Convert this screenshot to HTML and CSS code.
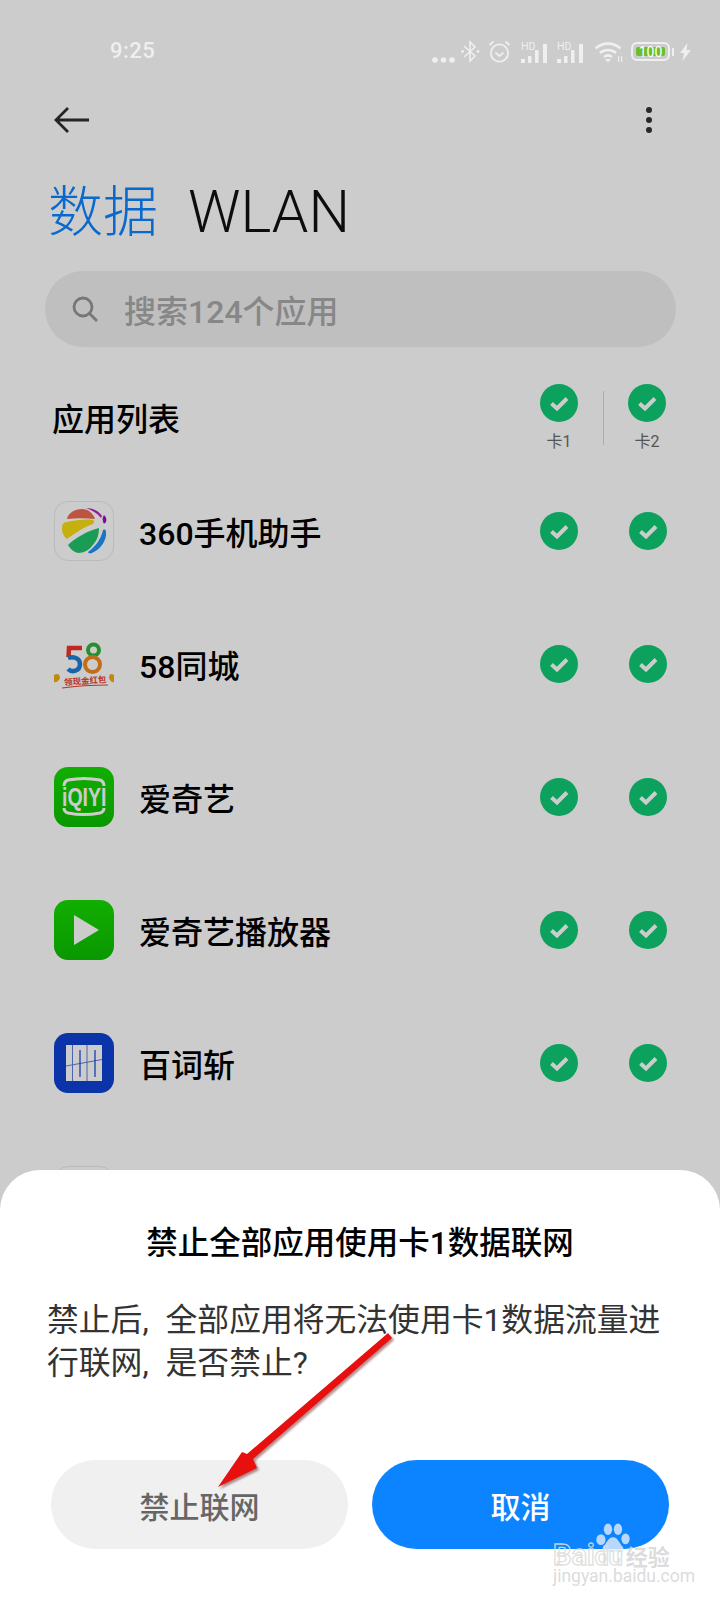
FILE: index.html
```html
<!DOCTYPE html>
<html lang="zh-CN">
<head>
    <meta charset="UTF-8">
    <meta name="viewport" content="width=device-width, initial-scale=1.0">
    <title>数据 WLAN</title>
    <link rel="stylesheet" href="styles.css">
</head>
<body>

<div class="screen">

    <div class="status-bar">
        <span class="clock">9:25</span>
        <div class="status-icons">
            <svg width="23" height="6" viewBox="0 0 23 6"><circle cx="3" cy="3" r="2.8"/><circle cx="11.5" cy="3" r="2.8"/><circle cx="20" cy="3" r="2.8"/></svg>
            <svg class="ic-bt" width="19" height="23" viewBox="0 0 19 23"><path d="M3 6l11 10-5 5V2l5 5L3 17" fill="none" stroke-width="1.6"/><circle cx="1.5" cy="11.5" r="1.4"/><circle cx="17" cy="11.5" r="1.4"/></svg>
            <svg class="ic-alarm" width="23" height="23" viewBox="0 0 23 23"><circle cx="11.5" cy="13" r="8.6" fill="none" stroke-width="1.8"/><path d="M7.5 12.5l4 3.5 4-3.5M1.5 5l4-3.5M21.5 5l-4-3.5" fill="none" stroke-width="1.8"/></svg>
            <div class="signal"><span>HD</span><svg width="27" height="19" viewBox="0 0 27 19"><rect x="0" y="15" width="4" height="4"/><rect x="7" y="12" width="3.5" height="7"/><rect x="14" y="6" width="3.5" height="13"/><rect x="22" y="0" width="4" height="19"/></svg></div>
            <div class="signal signal-2"><span>HD</span><svg width="27" height="19" viewBox="0 0 27 19"><rect x="0" y="15" width="4" height="4"/><rect x="7" y="12" width="3.5" height="7"/><rect x="14" y="6" width="3.5" height="13"/><rect x="22" y="0" width="4" height="19"/></svg></div>
            <svg class="ic-wifi" width="30" height="22" viewBox="0 0 30 22"><path d="M1.5 7.5c7-6.5 18-6.5 25 0M6 12c4.500-4 11.500-4 16 0M10 16c2.500-2 5.500-2 8 0" fill="none" stroke-width="2.6"/><path d="M11 18h6l-3 3.500z"/><rect x="24" y="15" width="1.2" height="6"/><rect x="27" y="15" width="1.200" height="6"/></svg>
            <div class="battery"><span class="battery-fill">100</span></div>
            <span class="battery-nub"></span>
            <svg class="ic-bolt" width="11" height="18" viewBox="0 0 11 18"><path d="M7.500 0L0 10h4l-1.500 8L11 7H6.500z"/></svg>
        </div>
    </div>

    <div class="top-bar">
        <svg width="36" height="28" viewBox="0 0 36 28"><path d="M35 14H3M14 2L2 14l12 12" fill="none" stroke="#2e2e2e" stroke-width="2.800"/></svg>
        <div class="more"><i></i><i></i><i></i></div>
    </div>

    <div class="tabs">
        <span class="tab tab-active">数据</span>
        <span class="tab">WLAN</span>
    </div>

    <div class="search">
        <svg width="28" height="28" viewBox="0 0 28 28"><circle cx="12" cy="12" r="9" fill="none" stroke="#959595" stroke-width="2.800"/><path d="M18.500 18.500L26 26" stroke="#959595" stroke-width="2.800"/></svg>
        <span>搜索124个应用</span>
    </div>

    <div class="list-head">
        <span class="list-title">应用列表</span>
        <div class="sims">
            <div class="sim">
                <svg class="check" viewBox="0 0 38 38"><use href="#check"/></svg>
                <span>卡1</span>
            </div>
            <div class="sim-line"></div>
            <div class="sim">
                <svg class="check" viewBox="0 0 38 38"><use href="#check"/></svg>
                <span>卡2</span>
            </div>
        </div>
    </div>

    <div class="row">
        <div class="app-icon icon-360">
            <svg width="60" height="60" viewBox="0 0 60 60">
                <path d="M13 18c1-6 8-10 15-10 6 0 11 4 13 10-9-1-19-1-28 0z" fill="#ec6a50"/>
                <path d="M32 7c7 0 13 3 16 8l-1 2c-4-5-9-8-15-10z" fill="#b81fc4"/>
                <path d="M50 14c2 2 3 4 2 7-1 2-3 2-3-1-1-2 0-4 1-6z" fill="#8f10c0"/>
                <path d="M8 28c0-4 1-7 5-7 9-2 18-3 26-2 2 1 1 3 0 4-9 3-18 9-26 15-3-2-5-6-5-10z" fill="#f8dc14"/>
                <path d="M14 44c8-8 20-14 31-17 0 7-2 13-7 18-3 4-8 7-14 7-4-1-8-4-10-8z" fill="#21c46a"/>
                <path d="M49 29c2-1 3 0 3 2 1 8-5 17-14 21-2 1-4 0-4-1 8-6 13-13 15-22z" fill="#2293f0"/>
            </svg>
        </div>
        <span class="app-name">360手机助手</span>
        <div class="row-checks"><svg class="check" viewBox="0 0 38 38"><use href="#check"/></svg><svg class="check" viewBox="0 0 38 38"><use href="#check"/></svg></div>
    </div>

    <div class="row">
        <div class="app-icon">
            <svg width="60" height="60" viewBox="0 0 60 60">
                <path d="M28 14H15l-.5 9" fill="none" stroke="#f0342b" stroke-width="4.500"/>
                <path d="M14 24c5-2 12 0 12 6 0 7-8 9-12 5" fill="none" stroke="#1f7fd8" stroke-width="4.500"/>
                <circle cx="39.500" cy="16" r="5.500" fill="none" stroke="#31b33a" stroke-width="4"/>
                <circle cx="38.500" cy="30.500" r="7.500" fill="none" stroke="#f08a1d" stroke-width="4"/>
                <path d="M0 41c3-2 6-1 6 3-1 3-4 5-6 4z" fill="#f2ad10"/>
                <path d="M60 41c-3-2-5-1-5 3 1 3 3 5 5 4z" fill="#f2ad10"/>
                <text class="logo-58" x="10" y="50" transform="rotate(-4 30 48)">领现金红包</text>
                <path d="M8 54c14-2 28-3 46-3" fill="none" stroke="#e8432e" stroke-width="1.200"/>
            </svg>
        </div>
        <span class="app-name">58同城</span>
        <div class="row-checks"><svg class="check" viewBox="0 0 38 38"><use href="#check"/></svg><svg class="check" viewBox="0 0 38 38"><use href="#check"/></svg></div>
    </div>

    <div class="row">
        <div class="app-icon icon-green">
            <svg width="60" height="60" viewBox="0 0 60 60">
                <path d="M10 19c0-3 1-5 4-6 10-2 22-2 32 0 3 1 4 3 4 6M10 41c0 3 1 4 4 5 10 2 22 2 32 0 3-1 4-2 4-5" fill="none" stroke="#fff" stroke-width="3"/>
                <text class="logo-iqiyi" transform="translate(8 39) scale(1 1.3)">iQIYI</text>
            </svg>
        </div>
        <span class="app-name">爱奇艺</span>
        <div class="row-checks"><svg class="check" viewBox="0 0 38 38"><use href="#check"/></svg><svg class="check" viewBox="0 0 38 38"><use href="#check"/></svg></div>
    </div>

    <div class="row">
        <div class="app-icon icon-green">
            <svg width="60" height="60" viewBox="0 0 60 60"><path d="M20 15l25 15-25 15z" fill="#fff"/></svg>
        </div>
        <span class="app-name">爱奇艺播放器</span>
        <div class="row-checks"><svg class="check" viewBox="0 0 38 38"><use href="#check"/></svg><svg class="check" viewBox="0 0 38 38"><use href="#check"/></svg></div>
    </div>

    <div class="row">
        <div class="app-icon icon-blue">
            <svg width="60" height="60" viewBox="0 0 60 60">
                <rect x="12" y="12" width="36" height="36" fill="#fff"/>
                <path d="M18.500 12v36M33 12v36M12 33l36-6.500" stroke="#5d80e0" stroke-width="1"/>
                <path d="M26 17v27M41 17v27" stroke="#0d41d2" stroke-width="1.200"/>
            </svg>
        </div>
        <span class="app-name">百词斩</span>
        <div class="row-checks"><svg class="check" viewBox="0 0 38 38"><use href="#check"/></svg><svg class="check" viewBox="0 0 38 38"><use href="#check"/></svg></div>
    </div>

    <div class="row">
        <div class="app-icon icon-360"></div>
    </div>

    <div class="scrim"></div>

    <div class="sheet">
        <h2 class="sheet-title">禁止全部应用使用卡1数据联网</h2>
        <p class="sheet-text">禁止后, 全部应用将无法使用卡1数据流量进行联网, 是否禁止?</p>
        <div class="sheet-btns">
            <button class="btn btn-gray">禁止联网</button>
            <button class="btn btn-blue">取消</button>
        </div>
    </div>

    <!-- annotation arrow -->
    <svg class="arrow" width="200" height="170" viewBox="200 1325 200 170">
        <path d="M388 1333L392 1338 253 1459 257 1468 218 1487 242 1452 247 1454z" fill="#e8100f"/>
    </svg>

    <!-- watermark -->
    <div class="watermark">
        <svg class="paw" width="38" height="30" viewBox="0 0 40 36">
            <ellipse cx="5.500" cy="20" rx="5.500" ry="6.500"/>
            <ellipse cx="14" cy="7.500" rx="5" ry="7"/>
            <ellipse cx="26" cy="7.500" rx="5" ry="7"/>
            <ellipse cx="35" cy="19" rx="5" ry="6.500"/>
            <path d="M20 17c-6 0-8 8-12 12-2 4 2 7 6 6 4-1 8-1 12 0 4 1 8-2 6-6-4-4-6-12-12-12z"/>
        </svg>
        <div class="wm-line"><span class="wm-bai">Bai</span><span class="wm-du">du</span><span class="wm-cn">经验</span></div>
        <div class="wm-url">jingyan.baidu.com</div>
    </div>

</div>

<svg width="0" height="0" class="defs">
    <symbol id="check" viewBox="0 0 38 38">
        <circle cx="19" cy="19" r="19" fill="#0fcb75"/>
        <path d="M11.500 19.500l5.500 5 10-10" fill="none" stroke="#fff" stroke-width="4"/>
    </symbol>
</svg>

</body>
</html>
```

FILE: styles.css
```css
* {
    box-sizing: border-box;
}

body {
    margin: 0;
    font-family: Roboto, "Noto Sans CJK SC", sans-serif;
    background-color: white;
}

.defs {
    position: absolute;
}

.screen {
    position: relative;
    width: 720px;
    height: 1600px;
    overflow: hidden;
    background-color: white;
}

/* status bar sits above the scrim */
.status-bar {
    position: relative;
    z-index: 3;
    height: 86px;
    display: flex;
    align-items: flex-start;
    padding: 40px 29px 0 110px;
    color: #efefef;
}

.clock {
    font-size: 22px;
    line-height: 22px;
    letter-spacing: 0.5px;
    font-weight: 500;
}

.status-icons {
    margin-left: auto;
    display: flex;
    align-items: flex-end;
    height: 23px;
}

.status-icons svg {
    fill: #efefef;
    stroke: #efefef;
    stroke-width: 0;
    display: block;
}

.ic-bt {
    margin-left: 6px;
}

.ic-alarm {
    margin-left: 8px;
}

.signal {
    position: relative;
    margin-left: 10px;
    width: 27px;
    height: 19px;
}

.signal-2 {
    margin-left: 9px;
}

.signal span {
    position: absolute;
    left: 0;
    top: -2px;
    font-size: 10.500px;
    line-height: 10px;
}

.ic-wifi {
    margin-left: 10px;
}

.battery {
    margin-left: 7px;
    margin-bottom: 2px;
    width: 39px;
    height: 19px;
    padding: 3px;
    border: 2px solid #efefef;
    border-radius: 6px;
    display: flex;
}

.battery-fill {
    flex: 1;
    background-color: #6cbf2a;
    border-radius: 2px;
    color: white;
    font-size: 14px;
    line-height: 11px;
    text-align: center;
}

.battery-nub {
    margin: 0 0 7px 2px;
    width: 2px;
    height: 8px;
    background-color: #efefef;
}

.ic-bolt {
    margin-left: 6px;
    margin-bottom: 2px;
}

.top-bar {
    height: 68px;
    display: flex;
    align-items: center;
    justify-content: space-between;
    padding: 0 65px 0 54px;
}

.more {
    display: flex;
    flex-direction: column;
    gap: 4px;
    padding: 0 3px;
}

.more i {
    width: 6px;
    height: 6px;
    background-color: #333;
    border-radius: 50%;
}

.tabs {
    margin-top: 23px;
    height: 70px;
    display: flex;
    align-items: center;
    gap: 30px;
    padding-left: 48px;
}

.tab {
    font-size: 58.500px;
    line-height: 70px;
    font-weight: 300;
    color: #111;
}

.tab-active {
    font-size: 55px;
    color: #0d84ff;
}

.search {
    margin: 24px 44px 0 45px;
    height: 76px;
    border-radius: 38px;
    background-color: #efefef;
    display: flex;
    align-items: center;
    gap: 25px;
    padding-left: 26px;
    font-size: 32px;
    font-weight: 500;
    color: #a9a9a9;
}

.list-head {
    height: 117px;
    display: flex;
    align-items: center;
    padding: 22px 0 0 52px;
}

.list-title {
    font-size: 32px;
    font-weight: 500;
    color: #000;
}

.sims {
    margin-left: auto;
    display: flex;
    align-items: flex-start;
    padding-right: 54px;
    padding-top: 4px;
}

.sim {
    width: 38px;
    display: flex;
    flex-direction: column;
    align-items: center;
    font-size: 16px;
    line-height: 22px;
    color: #6c6c6c;
    gap: 9px;
}

.sim span {
    white-space: nowrap;
}

.sim-line {
    width: 1px;
    height: 54px;
    margin: 7px 24px 0 25px;
    background-color: #d8d8d8;
}

.check {
    width: 38px;
    height: 38px;
    display: block;
    flex: none;
}

.row {
    height: 133px;
    display: flex;
    align-items: center;
    padding-left: 54px;
}

.app-icon {
    width: 60px;
    height: 60px;
    border-radius: 14px;
    flex: none;
}

.app-icon svg {
    display: block;
}

.icon-360 {
    background-color: #fff;
    border: 1px solid #e9e9e9;
}

.icon-360 svg {
    margin: -1px;
}

.icon-green {
    background: linear-gradient(#17da00, #0cbe00);
}

.icon-blue {
    background-color: #0d41d2;
}

.logo-58 {
    font-size: 8.500px;
    font-weight: 700;
    fill: #e8432e;
}

.logo-iqiyi {
    font-family: "Liberation Sans", sans-serif;
    font-size: 19.500px;
    font-weight: 700;
    fill: #fff;
}

.app-name {
    margin-left: 25px;
    font-size: 32px;
    font-weight: 500;
    color: #000;
}

.row-checks {
    margin-left: auto;
    display: flex;
    gap: 51px;
    padding-right: 53px;
}

.scrim {
    position: absolute;
    inset: 0;
    z-index: 1;
    background-color: rgba(0, 0, 0, 0.2);
}

.sheet {
    position: absolute;
    left: 0;
    right: 0;
    top: 1170px;
    bottom: 0;
    z-index: 2;
    background-color: white;
    border-radius: 40px 40px 0 0;
    padding: 49px 48px 0;
}

.sheet-title {
    margin: 0;
    font-size: 31.500px;
    line-height: 50px;
    font-weight: 500;
    color: #000;
    text-align: center;
}

/* the comma takes less than a full CJK cell, so widen the space after it */
.sheet-text {
    margin: 30px -10px 0 -1px;
    font-size: 31.800px;
    line-height: 43px;
    word-spacing: 9px;
    color: #333;
}

.sheet-btns {
    margin: 75px 3px 0;
    display: flex;
    gap: 24px;
}

.btn {
    flex: 1;
    height: 89px;
    border: none;
    border-radius: 45px;
    font-family: inherit;
    font-size: 30px;
    font-weight: 500;
}

.btn-gray {
    background-color: #f0f0f0;
    color: #666;
}

.btn-blue {
    background-color: #0d84ff;
    color: white;
}

.arrow {
    position: absolute;
    left: 200px;
    top: 1325px;
    z-index: 4;
    filter: drop-shadow(2px 2px 1px rgba(90, 0, 0, 0.45));
}

.watermark {
    position: absolute;
    left: 553px;
    top: 1523px;
    z-index: 5;
    width: 130px;
    color: rgba(215, 215, 215, 0.9);
}

.paw {
    position: absolute;
    left: 41px;
    top: 0;
    fill: rgba(226, 236, 250, 0.8);
}

.wm-line {
    position: absolute;
    left: 0;
    top: 17px;
    white-space: nowrap;
    font-size: 29px;
    line-height: 30px;
    font-weight: 700;
}

.wm-bai,
.wm-du {
    color: transparent;
    -webkit-text-stroke: 1.300px rgba(220, 220, 220, 0.9);
}

.wm-du {
    font-size: 25px;
}

.wm-cn {
    margin-left: 3px;
    font-size: 22px;
}

.wm-url {
    position: absolute;
    left: 0;
    top: 44px;
    white-space: nowrap;
    font-size: 17.500px;
    line-height: 18px;
    color: rgba(215, 215, 215, 0.9);
}
```
